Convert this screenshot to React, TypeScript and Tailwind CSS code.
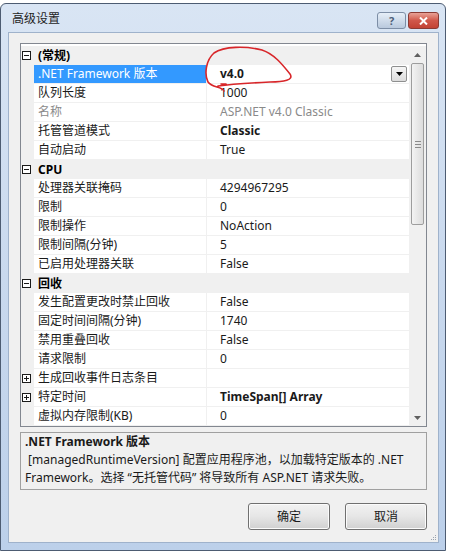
type Row =
  | { kind: "cat"; label: string }
  | {
      kind: "prop";
      name: string;
      value: string;
      bold?: boolean;
      disabled?: boolean;
      selected?: boolean;
      expandable?: boolean;
    };

const rows: Row[] = [
  { kind: "cat", label: "(常规)" },
  { kind: "prop", name: ".NET Framework 版本", value: "v4.0", bold: true, selected: true },
  { kind: "prop", name: "队列长度", value: "1000" },
  { kind: "prop", name: "名称", value: "ASP.NET v4.0 Classic", disabled: true },
  { kind: "prop", name: "托管管道模式", value: "Classic", bold: true },
  { kind: "prop", name: "自动启动", value: "True" },
  { kind: "cat", label: "CPU" },
  { kind: "prop", name: "处理器关联掩码", value: "4294967295" },
  { kind: "prop", name: "限制", value: "0" },
  { kind: "prop", name: "限制操作", value: "NoAction" },
  { kind: "prop", name: "限制间隔(分钟)", value: "5" },
  { kind: "prop", name: "已启用处理器关联", value: "False" },
  { kind: "cat", label: "回收" },
  { kind: "prop", name: "发生配置更改时禁止回收", value: "False" },
  { kind: "prop", name: "固定时间间隔(分钟)", value: "1740" },
  { kind: "prop", name: "禁用重叠回收", value: "False" },
  { kind: "prop", name: "请求限制", value: "0" },
  { kind: "prop", name: "生成回收事件日志条目", value: "", expandable: true },
  { kind: "prop", name: "特定时间", value: "TimeSpan[] Array", bold: true, expandable: true },
  { kind: "prop", name: "虚拟内存限制(KB)", value: "0" },
];

function ToggleBox({ open }: { open: boolean }) {
  return (
    <svg width="9" height="9" viewBox="0 0 9 9" className="block">
      <rect x="0.5" y="0.5" width="8" height="8" fill="#fff" stroke="#1a1a1a" />
      <path d="M2 4.5h5" stroke="#1a1a1a" />
      {!open && <path d="M4.5 2v5" stroke="#1a1a1a" />}
    </svg>
  );
}

function GridRow({ row }: { row: Row }) {
  if (row.kind === "cat") {
    return (
      <div className="flex h-[19px] items-center bg-[#f0f0f0]">
        <div className="flex w-[13px] justify-end pr-[3px]">
          <ToggleBox open />
        </div>
        <span className="pl-[4px] font-bold leading-[18px] text-[#000]">{row.label}</span>
      </div>
    );
  }
  return (
    <div className="flex h-[19px]">
      <div className="flex w-[13px] shrink-0 items-center justify-end bg-[#f0f0f0] pr-[3px]">
        {row.expandable && <ToggleBox open={false} />}
      </div>
      <div
        className={
          "w-[172px] shrink-0 border-b border-[#f0f0f0] pl-[4px] leading-[18px] whitespace-nowrap " +
          (row.selected
            ? "bg-[#3399ff] text-white"
            : row.disabled
              ? "bg-white text-[#8a8a8a]"
              : "bg-white text-[#1a1a1a]")
        }
      >
        {row.name}
      </div>
      <div className="w-px shrink-0 bg-[#f0f0f0]" />
      <div
        className={
          "flex min-w-0 flex-1 items-center border-b border-[#f0f0f0] bg-white pl-[13px] leading-[18px] whitespace-nowrap " +
          (row.bold ? "font-bold " : "") +
          (row.disabled ? "text-[#8a8a8a]" : "text-[#1a1a1a]")
        }
      >
        <span className="flex-1">{row.value}</span>
        {row.selected && (
          <div className="mr-[2px] flex h-[16px] w-[16px] items-center justify-center rounded-[2px] border border-[#8e8f8f] bg-gradient-to-b from-[#f6f6f6] to-[#dcdcdc]">
            <svg width="7" height="4" viewBox="0 0 7 4">
              <path d="M0 0h7L3.5 4z" fill="#000" />
            </svg>
          </div>
        )}
      </div>
    </div>
  );
}

function Scrollbar() {
  return (
    <div className="flex w-[17px] shrink-0 flex-col bg-[#f0f0f0]">
      <div className="flex h-[17px] items-center justify-center">
        <svg width="7" height="4" viewBox="0 0 7 4">
          <path d="M0 4h7L3.5 0z" fill="#606060" />
        </svg>
      </div>
      <div className="mx-[2px] flex h-[162px] flex-col items-center justify-center gap-[2px] rounded-[2px] border border-[#9d9d9d] bg-gradient-to-r from-[#f3f3f3] to-[#dcdcdc]">
        <div className="h-px w-[6px] bg-[#8a8a8a]" />
        <div className="h-px w-[6px] bg-[#8a8a8a]" />
        <div className="h-px w-[6px] bg-[#8a8a8a]" />
      </div>
      <div className="flex-1" />
      <div className="flex h-[17px] items-center justify-center">
        <svg width="7" height="4" viewBox="0 0 7 4">
          <path d="M0 0h7L3.5 4z" fill="#606060" />
        </svg>
      </div>
    </div>
  );
}

function DialogButton({ children }: { children: React.ReactNode }) {
  return (
    <button className="flex h-[27px] w-[82px] items-center justify-center rounded-[3px] border border-[#707070] bg-gradient-to-b from-[#f2f2f2] via-[#e6e6e6] to-[#d0d0d0] text-[12px] text-[#1a1a1a] shadow-[inset_0_0_0_1px_#fbfbfb]">
      {children}
    </button>
  );
}

export default function App() {
  return (
    <div className="relative h-[552px] w-[449px] overflow-hidden bg-white pt-[3px] font-['Noto_Sans','Noto_Sans_CJK_SC',sans-serif] text-[12px]">
      <div className="h-[548px] w-[446px] rounded-t-[6px] border border-[#4d5c72] bg-gradient-to-b from-[#d9e5f4] via-[#c9d9ee] to-[#bcd0ea]">
        <div className="flex h-[28px] items-start justify-between pl-[11px] pr-[6px]">
          <span className="pt-[6px] text-[12px] leading-[18px] text-[#1e1e1e]">高级设置</span>
          <div className="mt-[8px] flex gap-[2px]">
            <div className="flex h-[17px] w-[29px] items-center justify-center rounded-[3px] border border-[#7d8ea6] bg-gradient-to-b from-[#e6eef8] to-[#b9c9dd]">
              <span className="text-[11px] font-bold leading-none text-[#4d5f7a]">?</span>
            </div>
            <div className="flex h-[17px] w-[31px] items-center justify-center rounded-[3px] border border-[#8a3a34] bg-gradient-to-b from-[#e8a196] via-[#d0574a] to-[#c24234]">
              <svg width="9" height="8" viewBox="0 0 9 8">
                <path d="M1 0.5l7 7M8 0.5l-7 7" stroke="#fff" strokeWidth="2" />
              </svg>
            </div>
          </div>
        </div>
        <div className="relative ml-[7px] flex h-[511px] w-[431px] flex-col border border-[#9fb2cb] bg-[#f0f0f0] px-[11px] pt-[10px]">
          <div className="flex h-[384px] border border-[#828790] bg-white pt-[2px]">
            <div className="flex min-w-0 flex-1 flex-col overflow-hidden">
              {rows.map((r, i) => (
                <GridRow key={i} row={r} />
              ))}
            </div>
            <Scrollbar />
          </div>
          <div className="mt-[5px] h-[58px] border border-[#a0a0a0] bg-[#f0f0f0] pl-[4px] leading-[18px] text-[#1a1a1a]">
            <div className="font-bold">.NET Framework 版本</div>
            <div className="whitespace-nowrap">&nbsp;[managedRuntimeVersion] 配置应用程序池，以加载特定版本的 .NET</div>
            <div className="whitespace-nowrap">Framework。选择 “无托管代码” 将导致所有 ASP.NET 请求失败。</div>
          </div>
          <div className="mt-[13px] flex justify-end gap-[15px]">
            <DialogButton>确定</DialogButton>
            <DialogButton>取消</DialogButton>
          </div>
          <div className="absolute bottom-[2px] right-[2px] grid grid-cols-3 gap-[1px]">
            <span className="h-px w-px" />
            <span className="h-px w-px" />
            <span className="h-px w-px bg-[#9aa4b0]" />
            <span className="h-px w-px" />
            <span className="h-px w-px bg-[#9aa4b0]" />
            <span className="h-px w-px bg-[#9aa4b0]" />
            <span className="h-px w-px bg-[#9aa4b0]" />
            <span className="h-px w-px bg-[#9aa4b0]" />
            <span className="h-px w-px bg-[#9aa4b0]" />
          </div>
        </div>
      </div>
      <svg className="pointer-events-none absolute inset-0" width="449" height="552" viewBox="0 0 449 552">
        <path
          d="M224 91 C222 86 212 88 208 82 C204 74 206 60 214 53 C224 46 246 46 262 50 C274 54 282 64 290 74 C294 80 284 82 270 82 C250 83 232 84 218 86 M221 84 L226 84"
          fill="none"
          stroke="#d8262a"
          strokeWidth="1.6"
          strokeLinecap="round"
        />
      </svg>
    </div>
  );
}
